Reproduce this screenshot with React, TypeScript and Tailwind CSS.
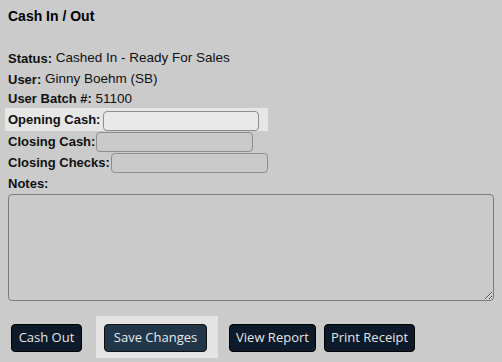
import React from 'react';

export default function App() {
  const [notes, setNotes] = React.useState('');

  return (
    <div className="w-[502px] h-[362px] bg-[#cbcbcb] text-[13px] text-[#111] font-['Liberation_Sans',Arial,sans-serif] overflow-hidden">
      <div className="pt-[6px] pl-[8px] pr-[8px]">
        <h2 className="text-[14px] font-bold leading-[20px] text-black">Cash In / Out</h2>

        <div className="mt-[22px]">
          <div className="h-[21px] flex items-center">
            <span className="font-bold">Status:</span>&nbsp;<span className="text-[13.5px]">Cashed In - Ready For Sales</span>
          </div>
          <div className="h-[21px] flex items-center">
            <span className="font-bold">User:</span>&nbsp;<span className="text-[13.5px]">Ginny Boehm (SB)</span>
          </div>
          <div className="h-[18px] flex items-center">
            <span className="font-bold">User Batch #:</span>&nbsp;<span className="text-[13.5px]">51100</span>
          </div>

          {/* focused row */}
          <div className="h-[23px] w-[263px] -ml-[3px] pl-[3px] flex items-center bg-[#e6e6e6]">
            <span className="font-bold">Opening Cash:</span>
            <input className="ml-[3px] mt-[2px] w-[156px] h-[20px] rounded-[4px] border border-[#8e8e8e] bg-[#e9e9e9] outline-none px-1" />
          </div>
          <div className="h-[21px] flex items-center">
            <span className="font-bold">Closing Cash:</span>
            <input className="ml-[1px] w-[157px] h-[20px] rounded-[4px] border border-[#8e8e8e] bg-[#cacaca] outline-none px-1" />
          </div>
          <div className="h-[21px] flex items-center">
            <span className="font-bold">Closing Checks:</span>
            <input className="ml-[1px] w-[157px] h-[20px] rounded-[4px] border border-[#8e8e8e] bg-[#cacaca] outline-none px-1" />
          </div>
          <div className="h-[21px] flex items-center">
            <span className="font-bold">Notes:</span>
          </div>
          <textarea
            value={notes}
            onChange={(e) => setNotes(e.target.value)}
            className="block w-[486px] h-[107px] rounded-[4px] border border-[#7c7c7c] bg-[#cacaca] outline-none p-1"
          />
        </div>
      </div>

      {/* Buttons */}
      <div className="mt-[15px] pl-[11px] flex items-start font-['Open_Sans',sans-serif] text-[13px]">
        <button className="mt-[8px] w-[71px] h-[28px] rounded-[4px] border border-black bg-[#0d1a29] text-[#e4e6e8]">Cash Out</button>
        <div className="ml-[14px] pl-[8px] pr-[11px] pt-[8px] pb-[6px] bg-[#e4e4e4]">
          <button className="block w-[103px] h-[28px] rounded-[4px] border border-[#111] bg-[#22364a] text-[#e8eaec]">Save Changes</button>
        </div>
        <button className="mt-[8px] ml-[11px] w-[87px] h-[28px] rounded-[4px] border border-black bg-[#0d1a29] text-[#e4e6e8]">View Report</button>
        <button className="mt-[8px] ml-[8px] w-[91px] h-[28px] rounded-[4px] border border-black bg-[#0d1a29] text-[#e4e6e8]">Print Receipt</button>
      </div>
    </div>
  );
}
